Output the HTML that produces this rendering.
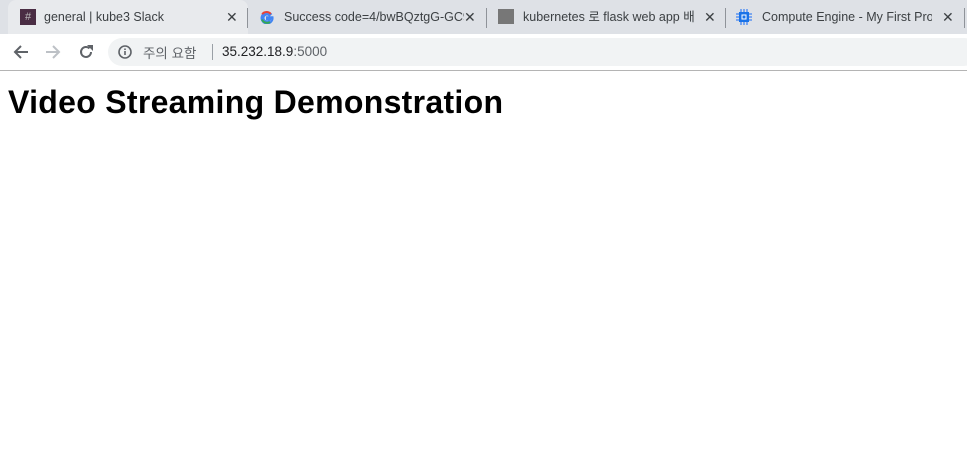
<!DOCTYPE html>
<html><head><meta charset="utf-8"><style>
body{margin:0;width:967px;height:457px;background:#fff;font-family:"Liberation Sans","Noto Sans CJK KR",sans-serif;overflow:hidden;position:relative}
.tabs{position:absolute;left:0;top:0;width:967px;height:34px;background:#dee1e6}
.tab{position:absolute;top:0;height:34px;font-size:12.5px;color:#3c4043;line-height:34px}
.tab .t{position:absolute;left:36px;white-space:nowrap;overflow:hidden}
.tab .x{position:absolute;font-size:14px;color:#3c4043}
.sep{position:absolute;top:8px;width:1px;height:20px;background:#8f9399}
.tb{position:absolute;top:34px;left:0;width:967px;height:36px;background:#fff;border-bottom:1px solid #b4b4b4}
.omni{position:absolute;left:108px;top:4px;width:870px;height:28px;border-radius:14px;background:#f1f3f4}
h1{position:absolute;left:8px;top:84px;margin:0;font-size:32px;font-weight:bold;color:#000;letter-spacing:0.3px}
</style></head><body>
<div class="tabs">
 <div class="tab" style="left:8px;width:240px;background:#e8eaed;border-radius:8px 8px 0 0">
  <div style="position:absolute;left:12px;top:9px;width:16px;height:16px;background:#4a2d44;color:#bbb;font-size:11px;line-height:16px;text-align:center">#</div>
  <span class="t">general | kube3 Slack</span><span class="x" style="left:218px">✕</span></div>
 <div class="sep" style="left:247px"></div>
 <div class="tab" style="left:248px;width:238px">
  <svg style="position:absolute;left:12px;top:10px" width="14" height="14" viewBox="0 0 14 14"><path d="M12.5 7.2H7v2h3.3a3.5 3.5 0 1 1-1-3.8l1.5-1.4A5.5 5.5 0 1 0 12.5 7.2z" fill="none" stroke="#4285f4" stroke-width="2"/><path d="M2.2 4.2A5.5 5.5 0 0 1 10.8 4" stroke="#ea4335" stroke-width="2" fill="none"/><path d="M2 9.5a5.5 5.5 0 0 0 8 2.5" stroke="#34a853" stroke-width="2" fill="none"/></svg>
  <span class="t" style="width:180px">Success code=4/bwBQztgG-GC9</span><span class="x" style="left:216px">✕</span></div>
 <div class="sep" style="left:486px"></div>
 <div class="tab" style="left:487px;width:238px">
  <div style="position:absolute;left:11px;top:9px;width:16px;height:15px;background:#777"></div>
  <span class="t" style="width:172px">kubernetes 로 flask web app 배포</span><span class="x" style="left:217px">✕</span></div>
 <div class="sep" style="left:725px"></div>
 <div class="tab" style="left:726px;width:238px">
  <svg style="position:absolute;left:10px;top:9px" width="16" height="16" viewBox="0 0 16 16"><rect x="3" y="3" width="10" height="10" fill="#1a73e8"/><rect x="5.5" y="5.5" width="5" height="5" fill="#fff"/><rect x="6.5" y="6.5" width="3" height="3" fill="#1a73e8"/><path d="M5 0v3M8 0v3M11 0v3M5 13v3M8 13v3M11 13v3M0 5h3M0 8h3M0 11h3M13 5h3M13 8h3M13 11h3" stroke="#4285f4" stroke-width="1.3"/></svg>
  <span class="t" style="width:170px">Compute Engine - My First Project</span><span class="x" style="left:216px">✕</span></div>
 <div class="sep" style="left:964px"></div>
</div>
<div class="tb">
 <svg style="position:absolute;left:13px;top:10px" width="16" height="16" viewBox="0 0 16 16"><path d="M15 8H2M8 2L2 8l6 6" stroke="#5f6368" stroke-width="2" fill="none"/></svg>
 <svg style="position:absolute;left:45px;top:10px" width="16" height="16" viewBox="0 0 16 16"><path d="M1 8h13M8 2l6 6-6 6" stroke="#bdc1c6" stroke-width="2" fill="none"/></svg>
 <svg style="position:absolute;left:78px;top:10px" width="16" height="16" viewBox="0 0 16 16"><path d="M13 8a5 5 0 1 1-1.5-3.6" stroke="#5f6368" stroke-width="2" fill="none"/><path d="M9 1h6v6z" fill="#5f6368"/></svg>
 <div class="omni">
  <svg style="position:absolute;left:10px;top:7px" width="14" height="14" viewBox="0 0 14 14"><circle cx="7" cy="7" r="6" stroke="#5f6368" stroke-width="1.6" fill="none"/><path d="M7 6v4M7 3.5v1.5" stroke="#5f6368" stroke-width="1.6"/></svg>
  <span style="position:absolute;left:35px;top:4px;font-size:13.5px;color:#5f6368">주의 요함</span>
  <span style="position:absolute;left:104px;top:6px;width:1px;height:16px;background:#9aa0a6"></span>
  <span style="position:absolute;left:114px;top:6px;font-size:13.5px;color:#202124">35.232.18.9<span style="color:#5f6368">:5000</span></span>
 </div>
</div>
<h1>Video Streaming Demonstration</h1>
</body></html>
